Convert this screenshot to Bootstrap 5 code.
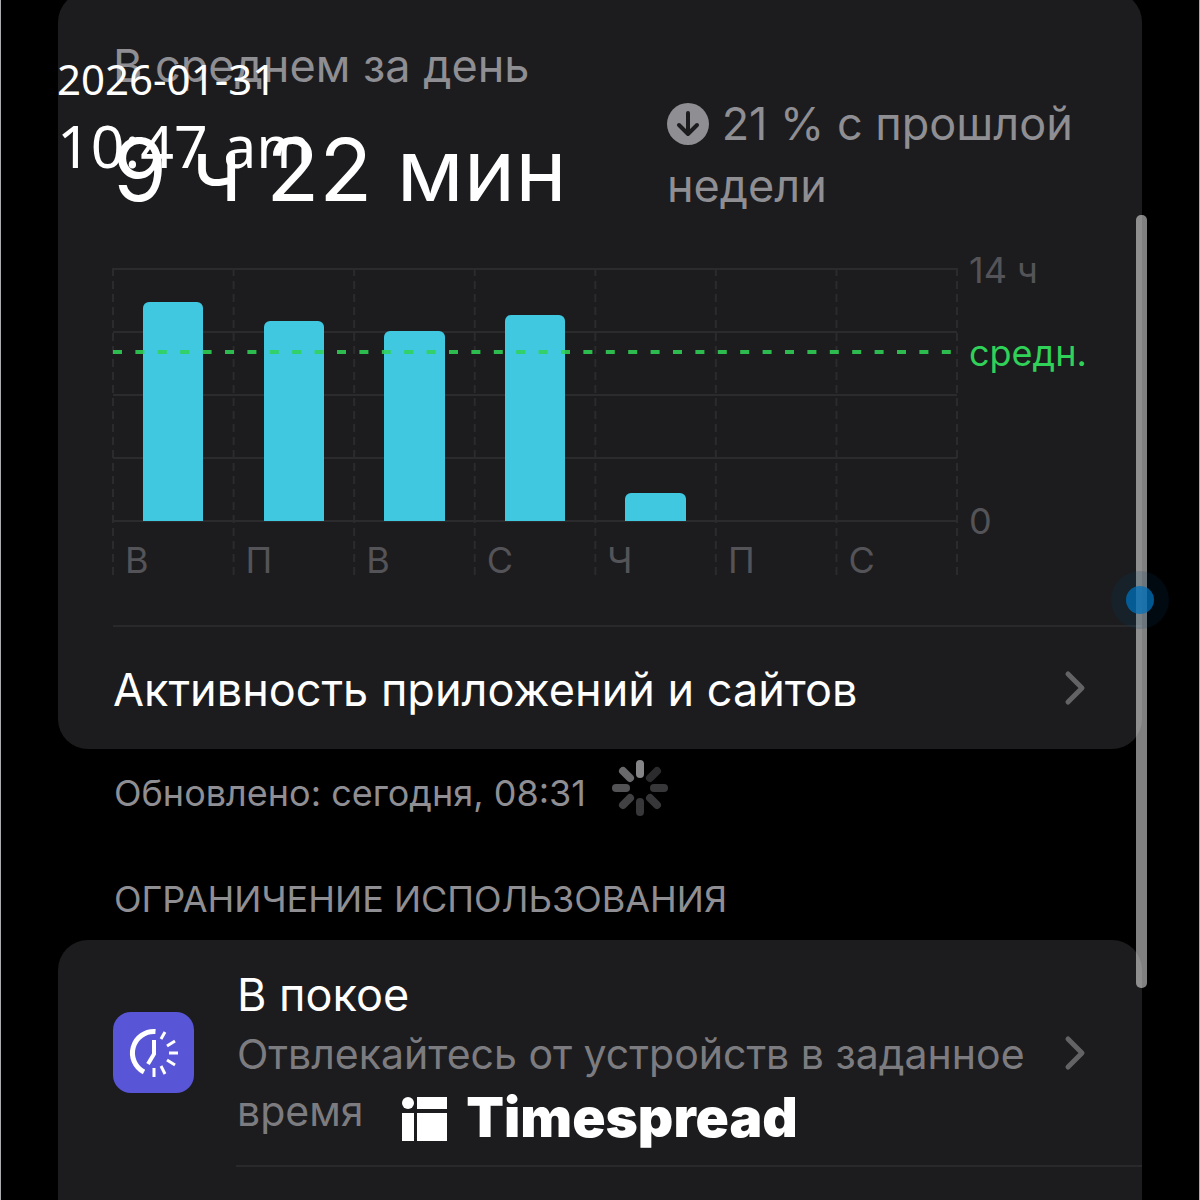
<!DOCTYPE html>
<html lang="ru">
<head>
<meta charset="utf-8">
<meta name="viewport" content="width=device-width, initial-scale=1">
<title>Экранное время</title>
<link href="https://cdn.jsdelivr.net/npm/bootstrap@5.3.0/dist/css/bootstrap.min.css" rel="stylesheet">
<style>
body{background:#000;color:#fff;font-family:Inter,"Liberation Sans",sans-serif}
.screen{height:100vh;padding:0 57px;border:solid #a9adad;border-width:0 1px}
.panel{background:#1c1c1e;border-radius:30px}
.summary{margin-top:-8px;padding-left:55px}
.muted{color:#8e8e93}
.head-row{height:276px;padding-top:43px}
.t-label{font-size:45px;line-height:62px}
.t-total{font-size:87px;line-height:108px;margin-top:19px}
.trend{width:475px;padding-top:58px}
.chart{height:310px}
.plot{height:253px}
.bar{width:50%;background:#40c8e0;border-radius:6px 6px 0 0}
.axis{color:#545458;font-size:36px;line-height:44px}
.day{padding:17px 0 0 12px}
.scale{width:185px;padding-left:12px}
.scale-max{margin-top:-20px}
.scale-avg{margin-top:39px;color:#30d158}
.scale-min{margin-top:124px}
.rule{border-top:2px solid #29292b}
.rule-activity{margin-top:47px}
.link-row{height:122px;padding-right:56px;font-size:45px;color:#fff}
.updated{height:86px;padding:2px 0 0 56px;font-size:36px}
.spinner{margin:0 0 10px 26px}
.section-title{font-size:36px;line-height:44px;margin:42px 0 19px;padding-left:56px;font-weight:400}
.limit{height:225px;padding:0 56px 0 55px;color:#fff}
.limit-copy{padding-left:43px;padding-top:24px;line-height:57px}
.t-title{font-size:45px;line-height:62px}
.t-sub{font-size:41px;color:#7c7c80}
.limit-rule{margin-left:178px}
.stamp{left:56px;top:48px;font-family:"Noto Sans",sans-serif;font-weight:400}
.stamp-date{font-size:42px;line-height:62px}
.stamp-time{font-size:59px;line-height:70px}
.thumb{right:52px;top:215px;width:11px;height:773px;border-radius:5px;background:rgba(255,255,255,.5)}
.touch{right:30px;top:571px;width:58px;height:58px;border-radius:50%;background:rgba(0,60,100,.16)}
.touch i{width:28px;height:28px;border-radius:50%;background:rgba(0,112,184,.75)}
.brand{bottom:50px;gap:19px;font-size:55px;line-height:66px;font-weight:900}
.brand svg{margin-top:4px}
</style>
<script src="https://cdn.jsdelivr.net/npm/bootstrap@5.3.0/dist/js/bootstrap.bundle.min.js"></script>
</head>
<body>
<main class="screen position-relative overflow-hidden">
  <section class="panel summary">
    <div class="head-row d-flex justify-content-between">
      <div>
        <div class="t-label muted">В среднем за день</div>
        <div class="t-total text-nowrap">9 ч 22 мин</div>
      </div>
      <div class="trend t-label muted">
        <svg width="42" height="42" viewBox="0 0 42 42" class="align-middle mb-2" aria-hidden="true"><circle cx="21" cy="21" r="21" fill="#8e8e93"/><path d="M21 10v21M12 22l9 9 9-9" fill="none" stroke="#1c1c1e" stroke-width="4" stroke-linecap="round" stroke-linejoin="round"/></svg>
        21 % с прошлой<br>недели
      </div>
    </div>
    <div class="d-flex">
      <div class="chart flex-grow-1 position-relative">
        <svg class="position-absolute top-0 start-0 overflow-visible" width="100%" height="310" stroke="#2b2b2d" stroke-width="2" aria-hidden="true">
          <line x1="0" x2="100%" y1="1" y2="1"/><line x1="0" x2="100%" y1="64" y2="64"/><line x1="0" x2="100%" y1="127" y2="127"/><line x1="0" x2="100%" y1="190" y2="190"/><line x1="0" x2="100%" y1="253" y2="253"/>
          <g stroke-dasharray="8 5"><line x1="0" x2="0" y2="310"/><line x1="14.286%" x2="14.286%" y2="310"/><line x1="28.571%" x2="28.571%" y2="310"/><line x1="42.857%" x2="42.857%" y2="310"/><line x1="57.143%" x2="57.143%" y2="310"/><line x1="71.429%" x2="71.429%" y2="310"/><line x1="85.714%" x2="85.714%" y2="310"/><line x1="100%" x2="100%" y2="310"/></g>
        </svg>
        <div class="plot d-flex position-relative">
          <div class="col d-flex align-items-end justify-content-center"><div class="bar" style="height:86.6%"></div></div>
          <div class="col d-flex align-items-end justify-content-center"><div class="bar" style="height:79%"></div></div>
          <div class="col d-flex align-items-end justify-content-center"><div class="bar" style="height:75.3%"></div></div>
          <div class="col d-flex align-items-end justify-content-center"><div class="bar" style="height:81.6%"></div></div>
          <div class="col d-flex align-items-end justify-content-center"><div class="bar" style="height:10.9%"></div></div>
          <div class="col"></div>
          <div class="col"></div>
          <svg class="position-absolute top-0 start-0" width="100%" height="100%" aria-hidden="true"><line x1="0" x2="100%" y1="84" y2="84" stroke="#30d158" stroke-opacity=".88" stroke-width="4" stroke-dasharray="9 13.4"/></svg>
        </div>
        <div class="axis d-flex">
          <div class="col day">В</div><div class="col day">П</div><div class="col day">В</div><div class="col day">С</div><div class="col day">Ч</div><div class="col day">П</div><div class="col day">С</div>
        </div>
      </div>
      <div class="scale axis">
        <div class="scale-max">14 ч</div>
        <div class="scale-avg">средн.</div>
        <div class="scale-min">0</div>
      </div>
    </div>
    <div class="rule rule-activity"></div>
    <a href="#activity" class="link-row d-flex align-items-center justify-content-between text-decoration-none">
      <span class="pt-1">Активность приложений и сайтов</span>
      <svg width="22" height="36" viewBox="0 0 22 36" fill="none" stroke="#636366" stroke-width="5" stroke-linecap="round" stroke-linejoin="round" aria-hidden="true"><path d="M4 4l14 14L4 32"/></svg>
    </a>
  </section>
  <div class="updated muted d-flex align-items-center">
    <span>Обновлено: сегодня, 08:31</span>
    <svg class="spinner" width="56" height="56" viewBox="-28 -28 56 56" stroke-width="8" stroke-linecap="round" aria-hidden="true"><path d="M0-24v10" stroke="#858588"/><path d="M17-17l-7 7" stroke="#2b2b2d"/><path d="M24 0H14" stroke="#37373a"/><path d="M17 17l-7-7" stroke="#37373a"/><path d="M0 24V14" stroke="#37373a"/><path d="M-17 17l7-7" stroke="#414143"/><path d="M-24 0h10" stroke="#535356"/><path d="M-17-17l7 7" stroke="#69696c"/></svg>
  </div>
  <h2 class="section-title muted">ОГРАНИЧЕНИЕ ИСПОЛЬЗОВАНИЯ</h2>
  <section class="panel">
    <a href="#downtime" class="limit d-flex align-items-center text-decoration-none">
      <svg class="flex-shrink-0" width="81" height="81" viewBox="0 0 81 81" fill="none" stroke="#fff" aria-hidden="true"><rect width="81" height="81" rx="18" fill="#5856d6" stroke="none"/><path d="M42.500 19.500A21.500 21.500 0 0 0 31 60" stroke-width="5"/><path d="M41 28v14l-6 10" stroke-width="4"/><path d="M48 27l4-7M54 34l8-5M56 41h9M54 48l8 5M48 54l4 8M41 56v9" stroke-width="3"/></svg>
      <div class="limit-copy flex-grow-1 align-self-start">
        <div class="t-title">В покое</div>
        <div class="t-sub">Отвлекайтесь от устройств в заданное время</div>
      </div>
      <svg class="flex-shrink-0" width="22" height="36" viewBox="0 0 22 36" fill="none" stroke="#636366" stroke-width="5" stroke-linecap="round" stroke-linejoin="round" aria-hidden="true"><path d="M4 4l14 14L4 32"/></svg>
    </a>
    <div class="rule limit-rule"></div>
    <div class="py-5"></div>
  </section>
  <div class="stamp position-absolute">
    <div class="stamp-date">2026-01-31</div>
    <div class="stamp-time">10:47 am</div>
  </div>
  <div class="thumb position-absolute"></div>
  <div class="touch position-absolute d-flex align-items-center justify-content-center"><i></i></div>
  <div class="brand position-absolute start-0 end-0 d-flex align-items-center justify-content-center">
    <svg width="45" height="44" viewBox="0 0 45 44" fill="#fff" aria-hidden="true"><circle cx="6" cy="6" r="6"/><path d="M0 16h12v28H0zM15 0h30v12H15zM15 16h30v28H15z"/></svg>
    <span>Timespread</span>
  </div>
</main>
</body>
</html>
